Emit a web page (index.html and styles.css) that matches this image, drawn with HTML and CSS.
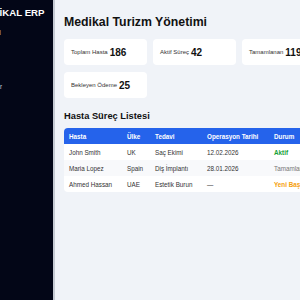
FILE: index.html
```html
<!DOCTYPE html>
<html lang="tr">
<head>
<meta charset="utf-8">
<title>Medikal ERP</title>
<link rel="stylesheet" href="styles.css">
</head>
<body>
<div class="layout">
  <aside class="sidebar">
    <div class="sidebar-inner">
      <div class="brand">MEDİKAL ERP</div>
      <nav class="menu">
        <a class="menu-item">Dashboard</a>
        <a class="menu-item">Hastalar</a>
        <a class="menu-item">Klinikler</a>
        <a class="menu-item">Randevular</a>
      </nav>
    </div>
  </aside>
  <main class="main">
    <h1 class="title">Medikal Turizm Yönetimi</h1>
    <div class="cards">
      <div class="card"><span class="card-label">Toplam Hasta</span> <b class="card-value">186</b></div>
      <div class="card"><span class="card-label">Aktif Süreç</span> <b class="card-value">42</b></div>
      <div class="card"><span class="card-label">Tamamlanan</span> <b class="card-value">119</b></div>
      <div class="card"><span class="card-label">Bekleyen Ödeme</span> <b class="card-value">25</b></div>
    </div>
    <h2 class="section-title">Hasta Süreç Listesi</h2>
    <table class="table">
      <colgroup>
        <col class="c1"><col class="c2"><col class="c3"><col class="c4"><col class="c5">
      </colgroup>
      <thead>
        <tr><th>Hasta</th><th>Ülke</th><th>Tedavi</th><th>Operasyon Tarihi</th><th>Durum</th></tr>
      </thead>
      <tbody>
        <tr><td>John Smith</td><td>UK</td><td>Saç Ekimi</td><td>12.02.2026</td><td class="st-active">Aktif</td></tr>
        <tr><td>Maria Lopez</td><td>Spain</td><td>Diş İmplantı</td><td>28.01.2026</td><td class="st-done">Tamamlandı</td></tr>
        <tr><td>Ahmed Hassan</td><td>UAE</td><td>Estetik Burun</td><td>—</td><td class="st-new">Yeni Başvuru</td></tr>
      </tbody>
    </table>
  </main>
</div>
</body>
</html>
```
FILE: styles.css
```css
html, body {
  margin: 0;
  padding: 0;
  overflow: hidden;
  height: 100%;
}
body {
  font-family: "Liberation Sans", Arial, sans-serif;
  background: #f0f3f8;
  color: #1f2937;
}
.layout {
  display: flex;
  height: 300px;
  width: 300px;
}
.sidebar {
  flex: 0 0 53px;
  background: #030617;
  border-right: 2px solid #c5cad3;
  overflow: hidden;
  display: flex;
  justify-content: flex-end;
}
.sidebar-inner {
  flex: 0 0 90px;
  padding: 7px 0 0 7px;
  box-sizing: border-box;
  color: #fff;
}
.brand {
  font-weight: bold;
  font-size: 9.7px;
  white-space: nowrap;
  line-height: 11px;
  margin-left: 8px;
}
.menu {
  display: flex;
  flex-direction: column;
  gap: 7px;
  margin-top: 9px;
}
.menu-item {
  font-size: 6.3px;
  color: #c9ced8;
  white-space: nowrap;
  line-height: 11px;
}
.main {
  flex: 0 0 auto;
  width: 300px;
  padding: 9px 0 0 9px;
  box-sizing: border-box;
}
.title {
  margin: 0;
  font-size: 12.3px;
  line-height: 16px;
  font-weight: bold;
  color: #111;
  padding-top: 5px;
}
.cards {
  display: grid;
  grid-template-columns: repeat(3, 83px);
  gap: 7px 6px;
  margin-top: 9px;
}
.card {
  background: #fff;
  border-radius: 4px;
  height: 26px;
  display: flex;
  align-items: center;
  padding-left: 7px;
  gap: 2px;
  white-space: nowrap;
}
.card-label {
  font-size: 6px;
  color: #333;
}
.card-value {
  font-size: 10px;
  color: #111;
}
.section-title {
  margin: 12px 0 0;
  font-size: 9.3px;
  line-height: 12px;
  font-weight: bold;
  color: #111;
}
.table {
  margin-top: 6px;
  border-collapse: separate;
  border-spacing: 0;
  table-layout: fixed;
  width: 260px;
  background: #fff;
  border-radius: 4px;
  overflow: hidden;
  font-size: 6.3px;
}
.c1 { width: 58px; }
.c2 { width: 28px; }
.c3 { width: 52px; }
.c4 { width: 67px; }
.c5 { width: 55px; }
.table th {
  background: #2563eb;
  color: #fff;
  font-weight: bold;
  text-align: left;
  height: 16px;
  padding: 0 5px;
  white-space: nowrap;
}
.table td {
  height: 16px;
  padding: 0 5px;
  color: #333;
  white-space: nowrap;
}
.table tbody tr:nth-child(2) td {
  background: #f8f9fb;
}
.st-active { color: #15a035 !important; font-weight: bold; }
.st-done { color: #777 !important; }
.st-new { color: #f59e0b !important; font-weight: bold; }
```
